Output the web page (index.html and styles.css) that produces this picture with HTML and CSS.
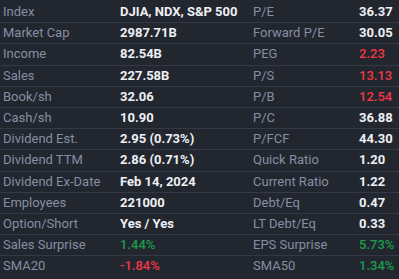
FILE: index.html
```html
<!DOCTYPE html>
<html>
<head>
<meta charset="utf-8">
<link rel="stylesheet" href="styles.css">
</head>
<body>
<div class="table">
  <div class="row"><span class="lbl">Index</span><span class="val">DJIA, NDX, S&amp;P 500</span><span class="lbl">P/E</span><span class="val">36.37</span></div>
  <div class="row"><span class="lbl">Market Cap</span><span class="val">2987.71B</span><span class="lbl">Forward P/E</span><span class="val">30.05</span></div>
  <div class="row"><span class="lbl">Income</span><span class="val">82.54B</span><span class="lbl">PEG</span><span class="val neg">2.23</span></div>
  <div class="row"><span class="lbl">Sales</span><span class="val">227.58B</span><span class="lbl">P/S</span><span class="val neg">13.13</span></div>
  <div class="row"><span class="lbl">Book/sh</span><span class="val">32.06</span><span class="lbl">P/B</span><span class="val neg">12.54</span></div>
  <div class="row"><span class="lbl">Cash/sh</span><span class="val">10.90</span><span class="lbl">P/C</span><span class="val">36.88</span></div>
  <div class="row"><span class="lbl">Dividend Est.</span><span class="val">2.95 (0.73%)</span><span class="lbl">P/FCF</span><span class="val">44.30</span></div>
  <div class="row"><span class="lbl">Dividend TTM</span><span class="val">2.86 (0.71%)</span><span class="lbl">Quick Ratio</span><span class="val">1.20</span></div>
  <div class="row"><span class="lbl">Dividend Ex-Date</span><span class="val">Feb 14, 2024</span><span class="lbl">Current Ratio</span><span class="val">1.22</span></div>
  <div class="row"><span class="lbl">Employees</span><span class="val">221000</span><span class="lbl">Debt/Eq</span><span class="val">0.47</span></div>
  <div class="row"><span class="lbl">Option/Short</span><span class="val">Yes / Yes</span><span class="lbl">LT Debt/Eq</span><span class="val">0.33</span></div>
  <div class="row"><span class="lbl">Sales Surprise</span><span class="val pos">1.44%</span><span class="lbl">EPS Surprise</span><span class="val pos">5.73%</span></div>
  <div class="row last"><span class="lbl">SMA20</span><span class="val neg">-1.84%</span><span class="lbl">SMA50</span><span class="val pos">1.34%</span></div>
</div>
</body>
</html>
```
FILE: styles.css
```css
html, body {
  margin: 0;
  padding: 0;
  background: #22262f;
}
body {
  font-family: Roboto, "Liberation Sans", sans-serif;
  font-size: 13px;
  width: 399px;
  height: 279px;
  overflow: hidden;
}
.table {
  padding-top: 2px;
}
.row {
  display: grid;
  grid-template-columns: 117px 133px 106px 1fr;
  padding-left: 3px;
  height: 20.2px;
  line-height: 20px;
  border-bottom: 1px solid #343945;
  white-space: nowrap;
}
.row.last {
  border-bottom: none;
}
.lbl {
  color: #868ea2;
}
.val {
  color: #eef0f4;
  font-weight: 700;
}
.neg {
  color: #f23645;
  font-weight: 500;
}
.pos {
  color: #1a9c4c;
  font-weight: 500;
}
```
